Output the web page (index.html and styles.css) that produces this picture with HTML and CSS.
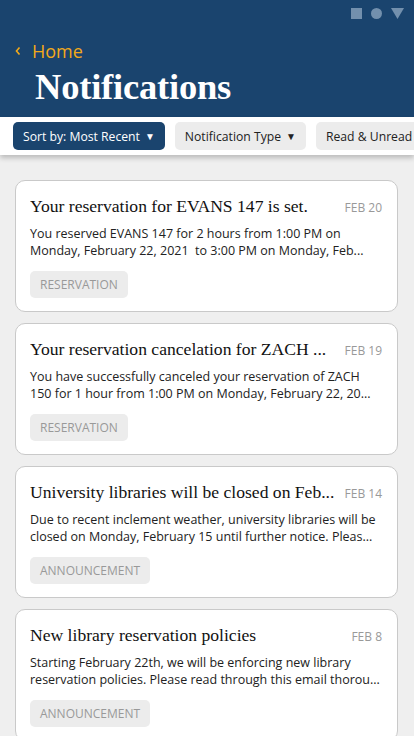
FILE: index.html
```html
<!DOCTYPE html>
<html>
<head>
<meta charset="utf-8">
<link rel="stylesheet" href="styles.css">
</head>
<body>
<div class="app">
  <header class="header">
    <div class="status">
      <span class="sq"></span><span class="dot"></span>
      <svg class="tri" width="13" height="11" viewBox="0 0 13 11"><polygon points="0,0 13,0 6.5,11" fill="#7390ad"/></svg>
    </div>
    <a class="back"><svg width="8" height="10" viewBox="0 0 8 10"><polyline points="5.5,1.5 2.5,5 5.5,8.5" fill="none" stroke="#f2a91a" stroke-width="1.6"/></svg><span>Home</span></a>
    <h1 class="title">Notifications</h1>
  </header>
  <div class="filters">
    <div class="chip chip-active">Sort by: Most Recent <span class="caret">▼</span></div>
    <div class="chip">Notification Type <span class="caret">▼</span></div>
    <div class="chip">Read &amp; Unread</div>
  </div>
  <main class="list">
    <div class="card">
      <div class="card-head"><h2 class="card-title">Your reservation for EVANS 147 is set.</h2><span class="date">FEB 20</span></div>
      <p class="card-body">You reserved EVANS 147 for 2 hours from 1:00 PM on Monday, February 22, 2021&nbsp; to 3:00 PM on Monday, Feb...</p>
      <span class="tag">RESERVATION</span>
    </div>
    <div class="card">
      <div class="card-head"><h2 class="card-title">Your reservation cancelation for ZACH ...</h2><span class="date">FEB 19</span></div>
      <p class="card-body">You have successfully canceled your reservation of ZACH 150 for 1 hour from 1:00 PM on Monday, February 22, 20...</p>
      <span class="tag">RESERVATION</span>
    </div>
    <div class="card">
      <div class="card-head"><h2 class="card-title">University libraries will be closed on Feb...</h2><span class="date">FEB 14</span></div>
      <p class="card-body">Due to recent inclement weather, university libraries will be closed on Monday, February 15 until further notice. Pleas...</p>
      <span class="tag">ANNOUNCEMENT</span>
    </div>
    <div class="card">
      <div class="card-head"><h2 class="card-title">New library reservation policies</h2><span class="date">FEB 8</span></div>
      <p class="card-body">Starting February 22th, we will be enforcing new library reservation policies. Please read through this email thorou...</p>
      <span class="tag">ANNOUNCEMENT</span>
    </div>
  </main>
</div>
</body>
</html>
```
FILE: styles.css
```css
* { box-sizing: border-box; }
html, body { margin: 0; padding: 0; }
body {
  width: 414px;
  height: 736px;
  overflow: hidden;
  background: #efefef;
  font-family: "Open Sans", "Noto Sans", sans-serif;
}
.app { display: flex; flex-direction: column; }
.header {
  background: #1a446e;
  height: 117px;
  padding: 8px 0 0 0;
  display: flex;
  flex-direction: column;
}
.status {
  display: flex;
  justify-content: flex-end;
  align-items: center;
  gap: 9px;
  padding-right: 10px;
  height: 11px;
}
.sq { width: 11px; height: 11px; background: #7390ad; display: block; }
.dot { width: 11px; height: 11px; border-radius: 50%; background: #7390ad; display: block; }
.tri { display: block; }
.back {
  display: flex;
  align-items: center;
  gap: 10px;
  margin: 20px 0 0 14px;
  color: #f2a91a;
  font-size: 18px;
  line-height: 24px;
}
.back svg { display: block; margin-top: -1px; }
.title {
  margin: 4px 0 0 35px;
  color: #fff;
  font-family: "Liberation Serif", "Times New Roman", serif;
  font-weight: bold;
  font-size: 36.5px;
  line-height: 40px;
  letter-spacing: -0.2px;
}
.filters {
  background: #fff;
  height: 38px;
  display: flex;
  align-items: center;
  gap: 10px;
  padding-left: 13px;
  white-space: nowrap;
  overflow: hidden;
  box-shadow: 0 3px 5px rgba(0,0,0,0.22);
  position: relative;
  z-index: 1;
}
.chip {
  flex: none;
  height: 28px;
  padding: 0 10px;
  border-radius: 5px;
  background: #ececec;
  color: #222;
  font-size: 12.2px;
  display: flex;
  align-items: center;
  gap: 5px;
}
.chip-active { background: #1a446e; color: #fff; }
.caret { font-size: 10px; }
.list {
  padding: 25px 16px 0 15px;
  display: flex;
  flex-direction: column;
  gap: 11px;
}
.card {
  background: #fff;
  border: 1px solid #c9c9c9;
  border-radius: 10px;
  height: 132px;
  padding: 12px 15px 0 14px;
  display: flex;
  flex-direction: column;
  align-items: flex-start;
}
.card-head {
  width: 100%;
  display: flex;
  justify-content: space-between;
  align-items: baseline;
  gap: 8px;
}
.card-title {
  margin: 0;
  font-family: "Liberation Serif", "Times New Roman", serif;
  font-weight: normal;
  font-size: 17.6px;
  line-height: 26px;
  color: #111;
  white-space: nowrap;
  overflow: hidden;
  min-width: 0;
}
.date {
  font-size: 12px;
  color: #999;
  flex: none;
}
.card-body {
  margin: 6px 0 0 0;
  font-size: 12.5px;
  line-height: 17px;
  color: #222;
}
.tag {
  margin-top: 12px;
  background: #ececec;
  color: #999;
  font-size: 12px;
  height: 27px;
  line-height: 27px;
  padding: 0 10px;
  border-radius: 5px;
}
```
